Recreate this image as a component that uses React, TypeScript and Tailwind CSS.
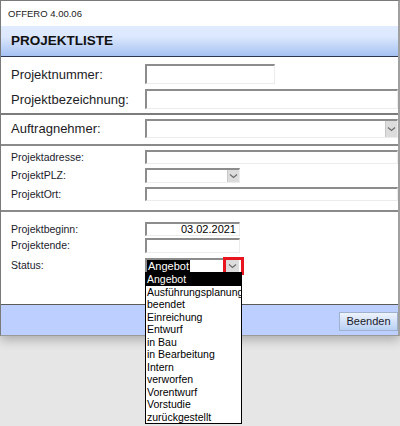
import React from "react";

const font = { fontFamily: '"Liberation Sans", Arial, sans-serif' };

function Arrow() {
  return (
    <svg width="9" height="6" viewBox="0 0 9 6" className="block">
      <path d="M1 1.5 L4.5 4.5 L8 1.5" fill="none" stroke="#6b6b6b" strokeWidth="1.2" />
    </svg>
  );
}

function Field({ w, h, children, right }: { w: string; h: string; children?: React.ReactNode; right?: boolean }) {
  return (
    <div
      className={`${w} ${h} bg-white border-t-2 border-l-2 border-t-[#8c8c8c] border-l-[#8c8c8c] border-b border-r border-b-[#ececec] border-r-[#ececec] flex items-center ${right ? "justify-end pr-[3px]" : ""} text-[11px] leading-none text-black overflow-hidden`}
    >
      {children}
    </div>
  );
}

function Select({ w, h }: { w: string; h: string }) {
  return (
    <div className={`${w} ${h} bg-white border-t-2 border-l-2 border-t-[#8c8c8c] border-l-[#8c8c8c] border-b border-r border-b-[#ececec] border-r-[#ececec] flex items-stretch`}>
      <div className="flex-1" />
      <div className="w-[12px] bg-[#dcdcdc] border-l border-[#c8c8c8] flex items-center justify-center">
        <Arrow />
      </div>
    </div>
  );
}

function Row({ label, big, mt, h, children }: { label: string; big?: boolean; mt: string; h: string; children: React.ReactNode }) {
  return (
    <div className={`flex items-center ${h} ${mt}`}>
      <div className={`w-[144px] pl-[10px] leading-none ${big ? "text-[13px] text-[#1c1c24]" : "text-[10.5px] text-[#1c1c2c]"}`}>{label}</div>
      {children}
    </div>
  );
}

const statuses = [
  "Angebot",
  "Ausführungsplanung",
  "beendet",
  "Einreichung",
  "Entwurf",
  "in Bau",
  "in Bearbeitung",
  "Intern",
  "verworfen",
  "Vorentwurf",
  "Vorstudie",
  "zurückgestellt",
];

export default function App() {
  return (
    <div className="w-[400px] h-[426px] bg-[#e6e6e6] relative overflow-hidden" style={font}>
      <div className="w-[400px] border-t border-l border-[#7a7a7a] border-r-2 border-r-[#a0a0a0] border-b border-b-[#9a9a9a] shadow-[0_4px_10px_rgba(0,0,0,0.25)]">
        <div className="h-[25px] bg-white flex items-center pl-[7px] text-[9.5px] leading-none text-[#222]">OFFERO 4.00.06</div>
        <div className="h-[31px] bg-[linear-gradient(to_bottom,#e0ebff_0%,#dce8fe_35%,#a6c2f2_100%)] border-b border-[#2c3650] flex items-center pl-[10px]">
          <span className="text-[13.5px] leading-none font-bold text-[#111]">PROJEKTLISTE</span>
        </div>
        <div className="h-[247px] bg-white flex flex-col pt-[7px]">
          <Row label="Projektnummer:" big mt="" h="h-[20px]">
            <Field w="w-[130px]" h="h-[20px]" />
          </Row>
          <Row label="Projektbezeichnung:" big mt="mt-[5px]" h="h-[20px]">
            <Field w="flex-1" h="h-[20px]" />
          </Row>
          <div className="mt-[4px] h-[2px] bg-[#7c7c7c] shrink-0" />
          <Row label="Auftragnehmer:" big mt="mt-[4px]" h="h-[19px]">
            <Select w="flex-1" h="h-[19px]" />
          </Row>
          <div className="mt-[6px] h-[2px] bg-[#8a8a8a] shrink-0" />
          <Row label="Projektadresse:" mt="mt-[4px]" h="h-[14px]">
            <Field w="flex-1" h="h-[14px]" />
          </Row>
          <Row label="ProjektPLZ:" mt="mt-[4px]" h="h-[15px]">
            <Select w="w-[95px]" h="h-[15px]" />
          </Row>
          <Row label="ProjektOrt:" mt="mt-[4px]" h="h-[14px]">
            <Field w="flex-1" h="h-[14px]" />
          </Row>
          <div className="mt-[9px] h-[2px] bg-[#8a8a8a] shrink-0" />
          <Row label="Projektbeginn:" mt="mt-[10px]" h="h-[14px]">
            <Field w="w-[95px]" h="h-[14px]" right>
              03.02.2021
            </Field>
          </Row>
          <Row label="Projektende:" mt="mt-[2px]" h="h-[15px]">
            <Field w="w-[95px]" h="h-[15px]" />
          </Row>
          <Row label="Status:" mt="mt-[5px]" h="h-[14px]">
            <div className="w-[95px] h-[14px] relative flex items-stretch bg-white border-t-2 border-l-2 border-t-[#8c8c8c] border-l-[#8c8c8c]">
              <div className="flex-1 flex items-center text-[11px] leading-none">
                <span className="bg-black text-white px-[1px] py-[1px]">Angebot</span>
              </div>
              <div className="w-[14px] bg-[#dcdcdc] flex items-center justify-center mr-[1px]">
                <Arrow />
              </div>
              <div className="absolute right-[-4px] top-[-3px] w-[21px] h-[18px] border-[3px] border-[#e8141e]" />
            </div>
          </Row>
        </div>
        <div className="h-[31px] bg-[#bccfff] border-t border-[#5a5a5a] flex items-center justify-end">
          <div className="w-[59px] h-[19px] mt-[2px] border border-[#9fb1cc] bg-[linear-gradient(to_bottom,#eef3fc,#b9d0f4)] flex items-center justify-center text-[11px] leading-none text-[#1a1a2a]">
            Beenden
          </div>
        </div>
      </div>

      <div className="absolute left-[145px] top-[272px] w-[97px] bg-white border border-black text-[10.5px] leading-[12.5px] text-black">
        {statuses.map((s, i) => (
          <div key={s} className={`pl-[1px] whitespace-nowrap overflow-hidden ${i === 0 ? "bg-black text-white" : ""}`}>
            {s}
          </div>
        ))}
      </div>
    </div>
  );
}
